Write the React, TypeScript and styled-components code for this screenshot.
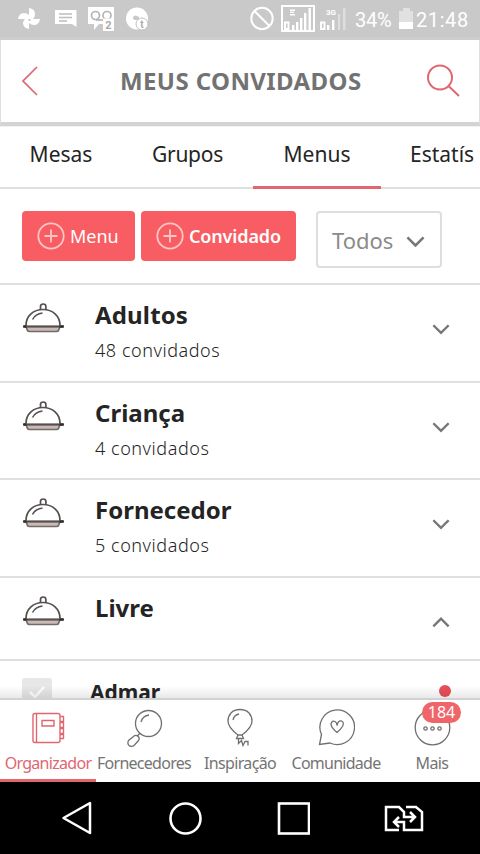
import React from 'react';
import styled, { createGlobalStyle, css } from 'styled-components';

const coral = '#e0676f';

const GlobalStyle = createGlobalStyle`
  * { box-sizing: border-box; }
  body { margin: 0; background: #fff; overflow: hidden; }
  svg { display: block; flex: none; }
`;

const Screen = styled.div`
  width: 480px;
  height: 854px;
  display: flex;
  flex-direction: column;
  overflow: hidden;
  background: #fff;
  color: #242424;
  font-family: 'Noto Sans', 'Open Sans', sans-serif;
  white-space: nowrap;
`;

const StatusBar = styled.div`
  flex: none;
  height: 40px;
  display: flex;
  align-items: center;
  background: #c9c9c9;
  border-bottom: 3px solid #cdcdcd;
  color: #fff;
`;

const StatusText = styled.span<{ $width: number; $spacing: number }>`
  width: ${(p) => p.$width}px;
  padding-top: 2px;
  font: 400 20px/38px Roboto, sans-serif;
  letter-spacing: ${(p) => p.$spacing}px;
`;

const Header = styled.header`
  flex: none;
  height: 86px;
  padding: 0 19px 0 21px;
  display: grid;
  grid-template-columns: 98px 1fr 34px;
  align-items: center;
  border: 1px solid #dedede;
  border-top: 0;
  border-bottom: 4px solid #d3d3d3;
`;

const Title = styled.h1`
  margin: 0;
  font-size: 24px;
  line-height: 34px;
  font-weight: 700;
  letter-spacing: 0.4px;
  color: #727272;
`;

const Tabs = styled.nav`
  flex: none;
  height: 63px;
  display: grid;
  grid-template-columns: 122px 131px 128px 99px;
  border-top: 1px solid #f2f2f2;
`;

const Tab = styled.div<{ $active?: boolean; $clipped?: boolean; $spacing?: number }>`
  display: flex;
  justify-content: ${(p) => (p.$clipped ? 'flex-start' : 'center')};
  padding: 10px 0 0 ${(p) => (p.$clipped ? 29 : 0)}px;
  overflow: hidden;
  font-size: 21px;
  line-height: 34px;
  letter-spacing: ${(p) => p.$spacing ?? 0}px;
  border-bottom: 2px solid #dfdfdf;
  ${(p) =>
    p.$active &&
    css`
      border-bottom: 3px solid ${coral};
    `}
`;

const Toolbar = styled.div`
  flex: none;
  height: 94px;
  display: flex;
  align-items: flex-start;
  padding: 22px 0 0 22px;
`;

const AddButton = styled.div<{ $width: number; $bold?: boolean; $spacing: number }>`
  width: ${(p) => p.$width}px;
  height: 50px;
  margin-right: 6px;
  padding: 0 0 1px 15px;
  display: flex;
  align-items: center;
  gap: 5px;
  border-radius: 4px;
  background: #f85d64;
  color: #fff;
  font-size: 18px;
  font-weight: ${(p) => (p.$bold ? 600 : 400)};
  letter-spacing: ${(p) => p.$spacing}px;
`;

const Filter = styled.div`
  width: 126px;
  height: 57px;
  margin-left: 14px;
  padding: 0 15px 0 14px;
  display: flex;
  align-items: center;
  justify-content: space-between;
  border: 2px solid #dedede;
  border-radius: 4px;
  color: #8b8b8b;
  font-size: 22px;
  svg { margin-top: 4px; }
`;

const List = styled.main`
  flex: 1;
  min-height: 0;
  overflow: hidden;
  position: relative;
`;

const Row = styled.section<{ $height: number }>`
  height: ${(p) => p.$height}px;
  display: grid;
  grid-template-columns: 73px 1fr 41px;
  padding-left: 22px;
  border-top: 2px solid #e0e0e0;
`;

const RowIcon = styled.div`
  padding-top: 17px;
`;

const RowName = styled.div<{ $spacing: number }>`
  padding-top: 13px;
  font-size: 24px;
  line-height: 34px;
  font-weight: 700;
  letter-spacing: ${(p) => p.$spacing}px;
`;

const RowCount = styled.div`
  margin-top: 6px;
  font-size: 18px;
  line-height: 24px;
  font-weight: 300;
  letter-spacing: 0.55px;
`;

const RowArrow = styled.div`
  padding-top: 38px;
  margin-left: -7px;
`;

const Guest = styled.div`
  height: 80px;
  display: grid;
  grid-template-columns: 68px 1fr 41px;
  padding: 17px 0 0 22px;
  border-top: 2px solid #dedede;
`;

const Check = styled.div`
  width: 30px;
  height: 30px;
  border-radius: 3px;
  background: #e7e7e7;
`;

const GuestName = styled.div`
  font-size: 21px;
  line-height: 29px;
  font-weight: 700;
`;

const Dot = styled.div`
  width: 12px;
  height: 12px;
  margin-top: 7px;
  border-radius: 50%;
  background: #e94f58;
`;

const Fade = styled.div`
  position: absolute;
  inset: auto 0 0;
  height: 12px;
  background: linear-gradient(transparent, rgba(0, 0, 0, 0.09));
`;

const BottomNav = styled.nav`
  flex: none;
  height: 84px;
  display: grid;
  grid-template-columns: repeat(5, 96px);
  border-top: 2px solid #d2d2d2;
  background: #fff;
`;

const NavItem = styled.div<{ $active?: boolean; $spacing: number }>`
  position: relative;
  display: flex;
  flex-direction: column;
  align-items: center;
  padding-top: 7px;
  color: ${(p) => (p.$active ? coral : '#747474')};
  border-bottom: ${(p) => (p.$active ? `3px solid ${coral}` : '0')};
  font-size: 16px;
  line-height: 22px;
  letter-spacing: ${(p) => p.$spacing}px;
  svg { margin-bottom: 5px; }
`;

const Badge = styled.span`
  position: absolute;
  left: 38px;
  top: 2px;
  width: 39px;
  height: 21px;
  border-radius: 11px;
  background: #f0656a;
  color: #fff;
  font-size: 16px;
  line-height: 21px;
  letter-spacing: 0;
  text-align: center;
`;

const SystemBar = styled.div`
  flex: none;
  height: 72px;
  display: flex;
  align-items: center;
  justify-content: space-between;
  padding: 0 56px 0 60px;
  background: #000;
`;

const Chevron = ({ up = false, size = 18 }: { up?: boolean; size?: number }) => (
  <svg width={size} height={size * 0.7} viewBox="0 0 20 14" fill="none" stroke="#777" strokeWidth="2.7">
    <path d={up ? 'M1.5 11.5 10 3l8.5 8.5' : 'M1.5 2.5 10 11l8.5-8.5'} />
  </svg>
);

const PlusCircle = () => (
  <svg width="28" height="28" viewBox="0 0 28 28" fill="none" stroke="#ffc6c8" strokeWidth="1.8">
    <circle cx="14" cy="14" r="12.7" />
    <path d="M7.5 14h13M14 7.5v13" />
  </svg>
);

const Cloche = () => (
  <svg width="43" height="32" viewBox="0 0 43 32" fill="none" stroke="#55504f" strokeWidth="1.7">
    <path d="M18.5 8V4.5q0-2.500 2.700-2.500t2.700 2.500V8" />
    <path d="M4 23.500C4 14 11.500 7.500 21 7.500S38 14 38 23.500" />
    <path d="M10.500 17.500c2-4 5.500-6 10-6.500" strokeWidth="1.5" />
    <path d="M4 24.500h34l-1.500 4q-.5 1-2 1h-27q-1.500 0-2-1z" fill="#c9bab6" stroke="#746a69" />
    <path d="M1 24.500h41" strokeWidth="2" />
    <path d="M1.500 24.500h3M37.500 24.500h4" stroke="#302d2d" strokeWidth="2.600" />
  </svg>
);

const statusIcons = (
  <svg width="150" height="37" viewBox="0 0 150 37" fill="#fff">
    <path d="M29 19V8q6 1 6 6 0 3-2 5h7q-1 6-6 6-3 0-5-2v6q-6-1-6-6 0-2 2-4h-7q1-6 6-6 3 0 5 2z" />
    <path d="M28.500 19h2v2h-2z" fill="#c9c9c9" />
    <path d="M55 10h21.500v17L72 24H55z" />
    <path d="M59 14h13M59 17.500h13M59 21h8" stroke="#bdbdbd" strokeWidth="1.500" />
    <path d="M88 7h26v24h-11v-7h-4l-5 6v-6h-6z" />
    <g fill="none" stroke="#b5b5b5" strokeWidth="1.700">
      <circle cx="95.500" cy="15.500" r="4" />
      <circle cx="107" cy="15.500" r="4" />
      <path d="M96 20h11" />
    </g>
    <rect x="103" y="18.500" width="11" height="12.500" />
    <text x="108.300" y="28.500" fontFamily="Roboto, sans-serif" fontSize="11" fontWeight="700" fill="#aaa" textAnchor="middle">2</text>
    <circle cx="137" cy="18.500" r="11" />
    <path d="M133 19v-2q2-3 6 0v3h-4" fill="#c9c9c9" />
    <circle cx="142" cy="24" r="6" stroke="#c0c0c0" />
    <text x="142" y="28" fontFamily="Roboto, sans-serif" fontSize="10" fontWeight="700" fill="#aaa" textAnchor="middle">t</text>
  </svg>
);

const signalIcons = (
  <svg width="205" height="37" viewBox="150 0 205 37" fill="#fff">
    <g fill="none" stroke="#fff" strokeWidth="2">
      <circle cx="262" cy="18.500" r="10.700" />
      <path d="m254.500 11 15 15" />
      <rect x="282" y="6" width="32" height="25" />
    </g>
    <path d="M290 9.500h5v1.500h-5zm0 2.200h4v1.300h-4zm0 2.300h5v1.500h-5zM292 25h2.400v5H292zm4-3h2.400v8H296zm4-4h2.400v12H300zm4-5h2.400v17H304zm4.500-5h2.400v22h-2.400z" />
    <path d="M327 25h2.400v5H327zm5-5h2.400v10H332z" />
    <path d="M285 22.500h3.500v6.500H285zM321 22.500h3.500v6.500H321z" fill="none" stroke="#fff" strokeWidth="1.900" />
    <path d="M338 14h2v16h-2zm5-6h2.500v22H343z" fill="#dedede" />
    <text x="326" y="15" fontFamily="Roboto, sans-serif" fontSize="8" fontWeight="700">3G</text>
  </svg>
);

const navIcons = {
  organizer: (
    <svg width="36" height="40" viewBox="0 0 36 40" fill="none" stroke={coral} strokeWidth="1.400">
      <rect x="3" y="6.500" width="27" height="29" rx="2" />
      <path d="M6.500 6.500v29M12 13.500h12v5.500H12zM30 9.500h3.500v5H30M30 15.500h3.500v5H30M30 21.500h3.500v5H30M30 27.500h3.500v4H30" />
    </svg>
  ),
  search: (
    <svg width="38" height="40" viewBox="0 0 38 40" fill="none" stroke="#707070" strokeWidth="1.300">
      <circle cx="23.500" cy="16.500" r="13" />
      <path d="M16 15q1.500-6 8-7M15 26l-3 3.500M8.500 29.500q2-2 4.500-.500 2 2 .500 4.500L9.500 38q-2.500 2.500-5.500.500-2-2-.500-5z" />
    </svg>
  ),
  balloon: (
    <svg width="32" height="40" viewBox="0 0 32 40" fill="none" stroke="#707070" strokeWidth="1.300">
      <path d="M16 2.500C8 2.500 4 8 4 14s6 11 10 14h4c4-3 10-8 10-14S24 2.500 16 2.500zM14 28l-1.500 3.500h7L18 28M14.500 31.500v5l3-3 1.500 5 2-4h3v4M9 13q1-5 6-6" />
    </svg>
  ),
  community: (
    <svg width="38" height="40" viewBox="0 0 38 40" fill="none" stroke="#707070" strokeWidth="1.300">
      <path d="M4.500 27.500A17.300 17.300 0 1 1 13 36l-10.500 1.500z" />
      <path d="M20 25.500q-6-5-6-8.500 1-4 4-2.500 2 1 2 4 1-5 4.500-4.500 3 1 1 5.500-2 3-5.500 6z" />
    </svg>
  ),
  more: (
    <svg width="38" height="40" viewBox="0 0 38 40" fill="none" stroke="#707070" strokeWidth="1.300">
      <circle cx="19.500" cy="20.500" r="17.300" />
      <circle cx="12.500" cy="21.500" r="1.700" />
      <circle cx="19.500" cy="21.500" r="1.700" />
      <circle cx="26.500" cy="21.500" r="1.700" />
    </svg>
  ),
};

const groups = [
  { name: 'Adultos', count: '48 convidados', height: 98, spacing: 0.15 },
  { name: 'Criança', count: '4 convidados', height: 97, spacing: 0 },
  { name: 'Fornecedor', count: '5 convidados', height: 98, spacing: 0 },
  { name: 'Livre', height: 83, spacing: 0, open: true },
];

export default function App() {
  return (
    <>
      <GlobalStyle />
      <Screen>
        <StatusBar>
          {statusIcons}
          {signalIcons}
          <StatusText $width={43} $spacing={-0.3}>34%</StatusText>
          <svg width="18" height="37" viewBox="0 0 18 37">
            <path d="M5 8h7v3h3v18H1V11h4z" fill="#e1e1e1" />
            <path d="M1 22h14v7H1z" fill="#fff" />
          </svg>
          <StatusText $width={60} $spacing={0.6}>21:48</StatusText>
        </StatusBar>
        <Header>
          <svg width="18" height="30" viewBox="0 0 18 30" fill="none" stroke={coral} strokeWidth="1.700">
            <path d="M15 1 1 15l14 14" />
          </svg>
          <Title>MEUS CONVIDADOS</Title>
          <svg width="34" height="34" viewBox="0 0 34 34" fill="none" stroke={coral} strokeWidth="2">
            <circle cx="14" cy="13.500" r="12" />
            <path d="m22.500 22 10.500 10" />
          </svg>
        </Header>
        <Tabs>
          <Tab>Mesas</Tab>
          <Tab $spacing={-0.3}>Grupos</Tab>
          <Tab $active>Menus</Tab>
          <Tab $clipped>Estatís</Tab>
        </Tabs>
        <Toolbar>
          <AddButton $width={113} $spacing={0}><PlusCircle />Menu</AddButton>
          <AddButton $width={155} $bold $spacing={-0.15}><PlusCircle />Convidado</AddButton>
          <Filter>Todos<Chevron size={19} /></Filter>
        </Toolbar>
        <List>
          {groups.map((g) => (
            <Row key={g.name} $height={g.height}>
              <RowIcon><Cloche /></RowIcon>
              <div>
                <RowName $spacing={g.spacing}>{g.name}</RowName>
                {g.count && <RowCount>{g.count}</RowCount>}
              </div>
              <RowArrow><Chevron up={g.open} /></RowArrow>
            </Row>
          ))}
          <Guest>
            <Check>
              <svg width="30" height="30" viewBox="0 0 30 30" fill="none" stroke="#fff" strokeWidth="2.500">
                <path d="m8 14 5 5 9-10" />
              </svg>
            </Check>
            <GuestName>Admar</GuestName>
            <Dot />
          </Guest>
          <Fade />
        </List>
        <BottomNav>
          <NavItem $active $spacing={-0.7}>{navIcons.organizer}Organizador</NavItem>
          <NavItem $spacing={-0.72}>{navIcons.search}Fornecedores</NavItem>
          <NavItem $spacing={-0.65}>{navIcons.balloon}Inspiração</NavItem>
          <NavItem $spacing={-0.75}>{navIcons.community}Comunidade</NavItem>
          <NavItem $spacing={-0.6}>{navIcons.more}<Badge>184</Badge>Mais</NavItem>
        </BottomNav>
        <SystemBar>
          <svg width="34" height="36" viewBox="0 0 34 36" fill="none" stroke="#fff" strokeWidth="2.500" strokeLinejoin="round">
            <path d="M30 3v30L3.500 18z" />
          </svg>
          <svg width="34" height="34" viewBox="0 0 34 34" fill="none" stroke="#fff" strokeWidth="2.600">
            <circle cx="17.500" cy="17.500" r="15" />
          </svg>
          <svg width="34" height="34" viewBox="0 0 34 34" fill="none" stroke="#fff" strokeWidth="2.600">
            <rect x="3" y="2.500" width="30" height="30" />
          </svg>
          <svg width="40" height="28" viewBox="0 0 40 28" fill="none" stroke="#fff" strokeWidth="2.500">
            <path d="M15 26H2V3h13l5 5v5h11M26 8l5 5-5 5M22 3h10l6 5v18H20v-8H10M15 13 10 18l5 5" />
          </svg>
        </SystemBar>
      </Screen>
    </>
  );
}
